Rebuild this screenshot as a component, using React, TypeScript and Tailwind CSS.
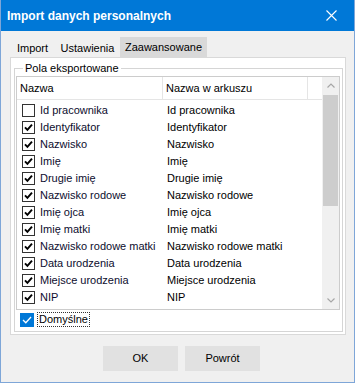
import React from "react"

const rows: [string, boolean][] = [
  ["Id pracownika", false],
  ["Identyfikator", true],
  ["Nazwisko", true],
  ["Imię", true],
  ["Drugie imię", true],
  ["Nazwisko rodowe", true],
  ["Imię ojca", true],
  ["Imię matki", true],
  ["Nazwisko rodowe matki", true],
  ["Data urodzenia", true],
  ["Miejsce urodzenia", true],
  ["NIP", true],
]

function Check({ checked }: { checked: boolean }) {
  return (
    <span className="flex h-[13px] w-[13px] shrink-0 items-center justify-center border border-[#333333] bg-white">
      {checked && (
        <svg width="9" height="9" viewBox="0 0 9 9">
          <path d="M1 4.4 L3.4 6.9 L8 1.6" stroke="#000" strokeWidth="1.9" fill="none" />
        </svg>
      )}
    </span>
  )
}

function Chevron({ up }: { up: boolean }) {
  return (
    <svg width="8" height="5" viewBox="0 0 8 5">
      <path d={up ? "M0.5 4.5 L4 1 L7.5 4.5" : "M0.5 0.5 L4 4 L7.5 0.5"} stroke="#a6a6a6" strokeWidth="1.2" fill="none" />
    </svg>
  )
}

export default function App() {
  return (
    <div className="h-[383px] w-[358px] bg-white font-['Liberation_Sans',Arial,sans-serif] text-[11px] text-black">
      <div className="flex h-[383px] w-[355px] flex-col border-x border-b border-[#7ea6d8]">
        {/* title bar */}
        <div className="flex h-[31px] shrink-0 items-center justify-between bg-[#0078d7] pl-[6px] pr-[17px]">
          <span className="text-[12px] font-bold text-white">Import danych personalnych</span>
          <svg width="11" height="11" viewBox="0 0 11 11">
            <path d="M0.5 0.5 L10.5 10.5 M10.5 0.5 L0.5 10.5" stroke="#fff" strokeWidth="1.1" />
          </svg>
        </div>

        <div className="flex flex-1 flex-col bg-[#f0f0f0] pl-[9px] pt-[6px]">
          {/* tabs */}
          <div className="flex h-[20px] items-end">
            <div className="flex h-[18px] w-[45px] items-center justify-center">Import</div>
            <div className="flex h-[18px] w-[65px] items-center justify-center">Ustawienia</div>
            <div className="flex h-[20px] w-[87px] items-center justify-center bg-[#d9d9d9]">Zaawansowane</div>
          </div>

          {/* tab page */}
          <div className="h-[278px] w-[336px] border border-[#d9d9d9] bg-white pl-[3px] pt-[10px]">
            <div className="relative h-[264px] w-[329px] border border-[#d5d5d5] pl-[1px] pt-[7px]">
              <span className="absolute -top-[7px] left-[8px] bg-white px-[2px] leading-[13px]">Pola eksportowane</span>

              {/* list */}
              <div className="flex h-[234px] w-[324px] overflow-hidden border border-[#cccccc]">
                <div className="flex w-[305px] flex-col">
                  <div className="flex h-[23px] shrink-0 border-b border-[#e5e5e5]">
                    <div className="flex w-[146px] items-center border-r border-[#e5e5e5] pl-[3px]">Nazwa</div>
                    <div className="flex w-[145px] items-center border-r border-[#e5e5e5] pl-[3px]">Nazwa w arkuszu</div>
                  </div>
                  <div className="flex flex-col pt-[2px]">
                    {rows.map(([name, checked]) => (
                      <div key={name} className="flex h-[17px] items-center">
                        <div className="flex w-[146px] items-center gap-[5px] pl-[5px]">
                          <Check checked={checked} />
                          <span className="text-[#0d0d2e]">{name}</span>
                        </div>
                        <span className="pl-[4px]">{name}</span>
                      </div>
                    ))}
                  </div>
                </div>

                {/* scrollbar */}
                <div className="flex w-[17px] flex-col bg-[#f0f0f0]">
                  <div className="flex h-[17px] items-center justify-center">
                    <Chevron up />
                  </div>
                  <div className="mx-auto mt-[1px] h-[111px] w-[15px] bg-[#cdcdcd]" />
                  <div className="flex-1" />
                  <div className="flex h-[17px] items-center justify-center">
                    <Chevron up={false} />
                  </div>
                </div>
              </div>

              {/* default checkbox */}
              <div className="mt-[2px] flex items-center gap-[3px] pl-[4px]">
                <span className="flex h-[14px] w-[14px] items-center justify-center bg-[#0078d7]">
                  <svg width="10" height="10" viewBox="0 0 10 10">
                    <path d="M1 5 L3.8 7.8 L9 2" stroke="#fff" strokeWidth="1.3" fill="none" />
                  </svg>
                </span>
                <span className="border border-dotted border-[#333] px-[1px] leading-[13px]">Domyślne</span>
              </div>
            </div>
          </div>

          {/* buttons */}
          <div className="mt-[11px] flex gap-[7px] pl-[93px]">
            <button className="flex h-[25px] w-[75px] items-center justify-center bg-[#e1e1e1]">OK</button>
            <button className="flex h-[25px] w-[75px] items-center justify-center bg-[#e1e1e1]">Powrót</button>
          </div>
        </div>
      </div>
    </div>
  )
}
